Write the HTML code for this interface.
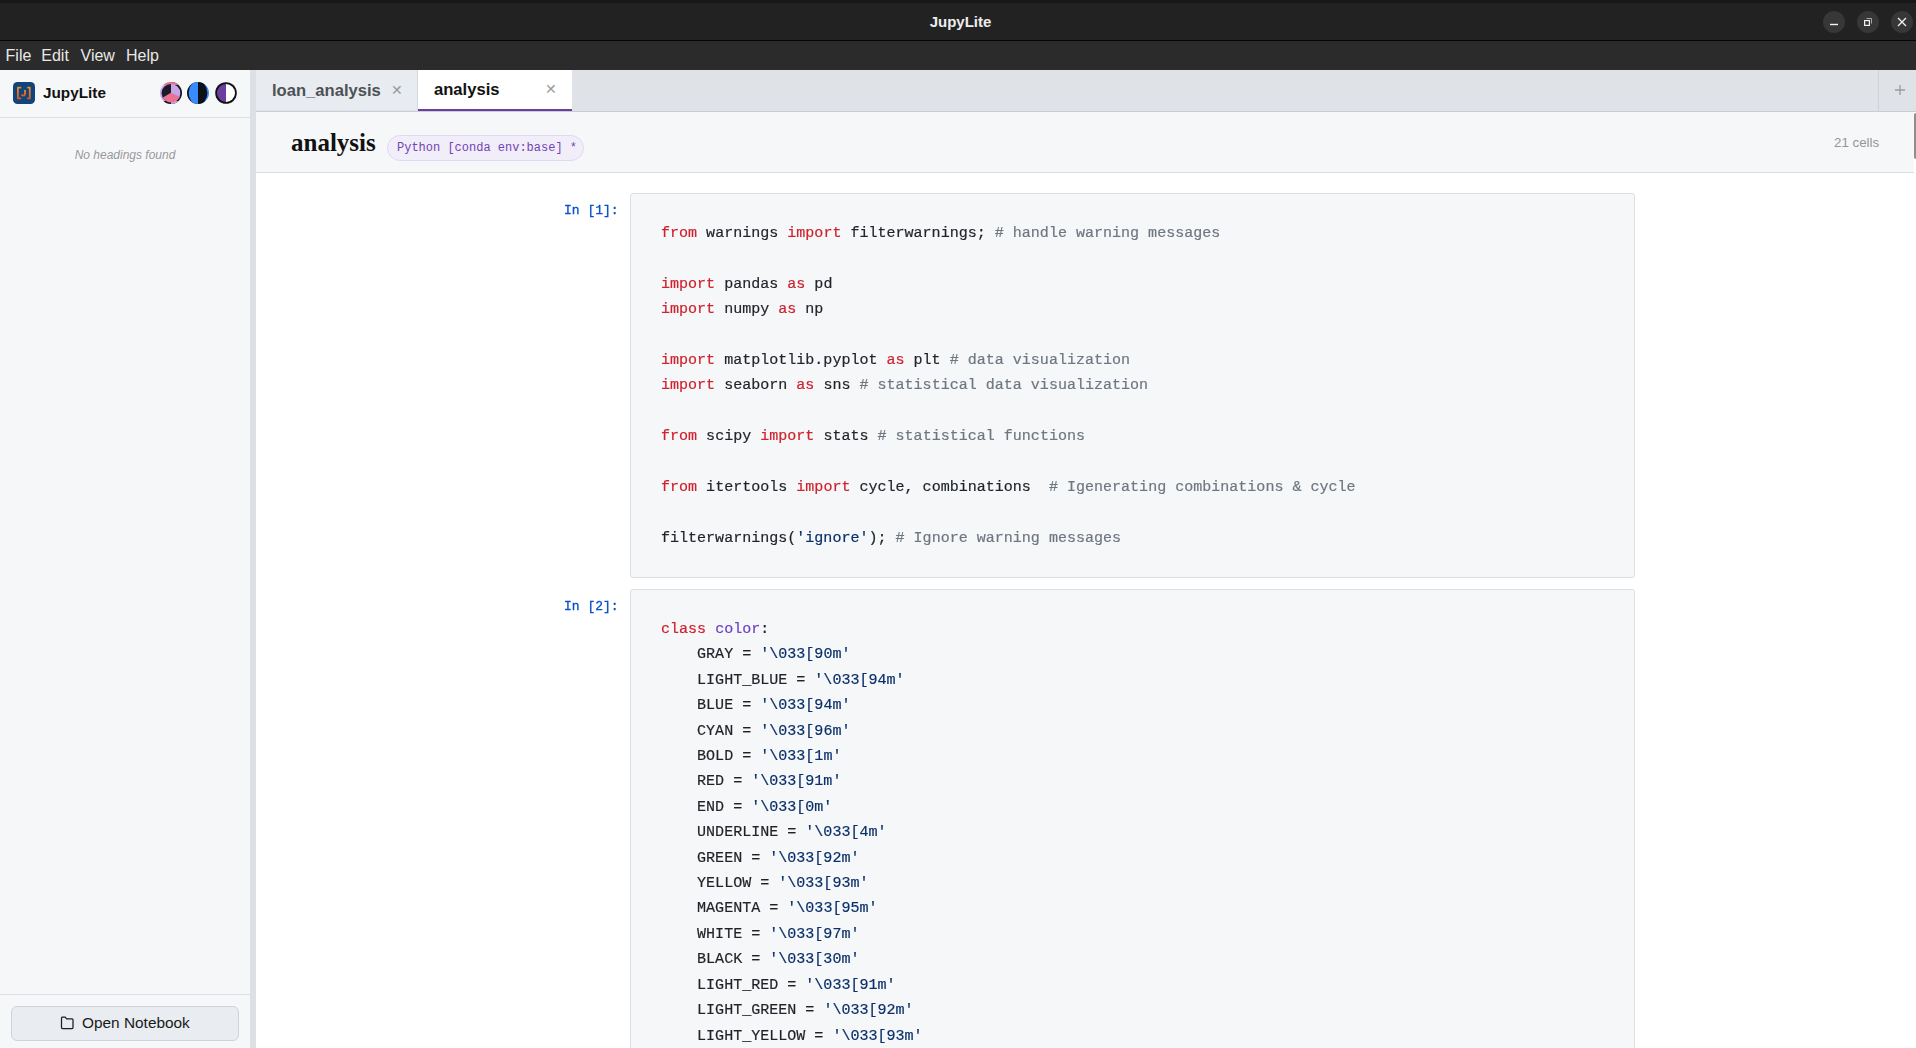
<!DOCTYPE html>
<html><head><meta charset="utf-8">
<style>
*{box-sizing:border-box;margin:0;padding:0}
html,body{width:1916px;height:1048px;overflow:hidden;background:#fff;font-family:"Liberation Sans",sans-serif}
.abs{position:absolute}
#topstrip{left:0;top:0;width:1916px;height:3px;background:#171717}
#titlebar{left:0;top:3px;width:1916px;height:37px;background:#222222}
#titleline{left:0;top:40px;width:1916px;height:1px;background:#050505}
#title{left:2.5px;top:3px;width:1916px;height:37px;line-height:37px;text-align:center;color:#ededed;font-weight:bold;font-size:15px}
.wbtn{top:11px;width:22px;height:22px;border-radius:50%;background:#373737}
#menubar{left:0;top:41px;width:1916px;height:29px;background:#2b2b2b}
.menu{top:41px;height:29px;line-height:29px;color:#e8e8e8;font-size:16px}
#sidebar{left:0;top:70px;width:250px;height:978px;background:#f6f7f9}
#resizer{left:250px;top:70px;width:6px;height:978px;background:#dde1e6}
#sbline1{left:0;top:117px;width:250px;height:1px;background:#dcdfe3}
#sbline2{left:0;top:994px;width:250px;height:1px;background:#dcdfe3}
#tabbar{left:256px;top:70px;width:1660px;height:42px;background:#dfe3e8}
#tabline{left:256px;top:111px;width:1660px;height:1px;background:#c9ced4}
.tab{top:70px;height:40px}
#nbhead{left:256px;top:112px;width:1658px;height:60px;background:#f6f7f9}
#nbheadline{left:256px;top:172px;width:1658px;height:1px;background:#d9dde2}
.cellbox{left:630px;width:1005px;background:#f6f7f9;border:1px solid #dcdfe3;border-radius:3px}
.prompt{left:564px;font-family:"Liberation Mono",monospace;font-size:13px;color:#0a50c8;-webkit-text-stroke:0.3px currentColor;will-change:transform}
pre{font-family:"Liberation Mono",monospace;font-size:15.04px;line-height:25.4px;color:#1f2328;position:absolute;left:661px;-webkit-text-stroke:0.2px currentColor;will-change:transform}
.k{color:#cf222e}.s{color:#0a3069}.c{color:#6e7781}.e{color:#6f42c1}
</style></head><body>
<div class="abs" id="topstrip"></div>
<div class="abs" id="titlebar"></div>
<div class="abs" id="titleline"></div>
<div class="abs" id="title">JupyLite</div>
<div class="abs wbtn" style="left:1823px"><svg width="22" height="22"><path d="M7 13.5 H15" stroke="#f2f2f2" stroke-width="1.4"/></svg></div>
<div class="abs wbtn" style="left:1857px"><svg width="22" height="22"><rect x="7.6" y="9.6" width="4.8" height="4.8" fill="none" stroke="#f2f2f2" stroke-width="1.2"/><path d="M9.5 7.5 H14.5 V12.5" fill="none" stroke="#a8a8a8" stroke-width="1"/></svg></div>
<div class="abs wbtn" style="left:1891px"><svg width="22" height="22"><path d="M7 7 L15 15 M15 7 L7 15" stroke="#f2f2f2" stroke-width="1.3"/></svg></div>
<div class="abs" id="menubar"></div>
<div class="abs menu" style="left:5.6px">File</div>
<div class="abs menu" style="left:41.3px">Edit</div>
<div class="abs menu" style="left:80.5px">View</div>
<div class="abs menu" style="left:126px">Help</div>

<div class="abs" id="sidebar"></div>
<div class="abs" id="resizer"></div>
<div class="abs" id="sbline1"></div>
<div class="abs" id="sbline2"></div>
<div class="abs" id="logo" style="left:13px;top:82px;width:22px;height:22px;border-radius:4.5px;background:#11447a">
<svg width="22" height="22" viewBox="0 0 22 22" style="position:absolute;left:0;top:0">
<defs><linearGradient id="lg" x1="0" y1="0" x2="0" y2="1"><stop offset="0" stop-color="#ec8d1e"/><stop offset="1" stop-color="#e05a20"/></linearGradient></defs>
<path d="M7.5 5.6 H4.9 V16.3 H7.5" fill="none" stroke="url(#lg)" stroke-width="1.8" stroke-linecap="round" stroke-linejoin="round"/>
<path d="M14.9 5.6 H16.8 V16.3 H14.9" fill="none" stroke="url(#lg)" stroke-width="1.8" stroke-linecap="round" stroke-linejoin="round"/>
<path d="M12 8.6 V11.4 Q12 13.5 10.3 13.5 Q9.5 13.5 9 13.1" fill="none" stroke="url(#lg)" stroke-width="1.8" stroke-linecap="round"/>
</svg></div>
<div class="abs" style="left:43px;top:83px;height:20px;line-height:20px;font-size:15.3px;font-weight:bold;color:#111">JupyLite</div>
<svg class="abs" style="left:160px;top:82px" width="22" height="22" viewBox="0 0 22 22">
<defs><clipPath id="c1"><circle cx="11" cy="11" r="11"/></clipPath><clipPath id="c1i"><circle cx="11" cy="11.2" r="9.3"/></clipPath></defs>
<g clip-path="url(#c1)">
<rect x="0" y="0" width="11" height="22" fill="#c6a6e6"/><rect x="11" y="0" width="11" height="22" fill="#15141c"/>
<rect x="0" y="0" width="22" height="3" fill="#e97192"/>
<rect x="0" y="19" width="11" height="3" fill="#15141c"/><rect x="11" y="19" width="11" height="3" fill="#c6a6e6"/>
</g>
<g clip-path="url(#c1i)">
<rect x="0" y="0" width="11" height="22" fill="#1c1a26"/><rect x="11" y="0" width="11" height="22" fill="#c6a6e6"/>
<path d="M11 10.8 L1.5 16.2 V22 H21 V15.6 Z" fill="#e97192"/>
</g>
</svg>
<svg class="abs" style="left:187px;top:82px" width="22" height="22" viewBox="0 0 22 22">
<defs><clipPath id="c2"><circle cx="11" cy="11" r="11"/></clipPath><clipPath id="c2i"><ellipse cx="11" cy="11" rx="9.4" ry="11.5"/></clipPath></defs>
<g clip-path="url(#c2)"><rect x="0" y="0" width="11" height="22" fill="#0d1117"/><rect x="11" y="0" width="11" height="22" fill="#388bfd"/>
<g clip-path="url(#c2i)"><rect x="0" y="-3" width="11" height="28" fill="#388bfd"/><rect x="11" y="-3" width="11" height="28" fill="#0d1117"/></g></g>
</svg>
<svg class="abs" style="left:215px;top:82px" width="22" height="22" viewBox="0 0 22 22">
<circle cx="11" cy="11" r="10.8" fill="#111"/>
<defs><clipPath id="c3i"><circle cx="11" cy="11" r="9"/></clipPath></defs>
<g clip-path="url(#c3i)"><rect x="0" y="0" width="11" height="22" fill="#6b3fa0"/><rect x="11" y="0" width="11" height="22" fill="#fff"/></g>
</svg>
<div class="abs" style="left:0;top:147px;width:250px;text-align:center;font-size:12px;font-style:italic;color:#999;line-height:16px">No headings found</div>
<div class="abs" style="left:11px;top:1006px;width:228px;height:35px;border:1px solid #cfd4d9;border-radius:6px;background:#e9ecf0"></div>
<svg class="abs" style="left:60px;top:1016px" width="15" height="14" viewBox="0 0 15 14">
<path d="M1.5 2.2 Q1.5 1.2 2.5 1.2 H5.2 L6.6 2.8 H12 Q13 2.8 13 3.8 V11.6 Q13 12.6 12 12.6 H2.5 Q1.5 12.6 1.5 11.6 Z" fill="none" stroke="#1d1d1d" stroke-width="1.25" stroke-linejoin="round"/>
</svg>
<div class="abs" style="left:82px;top:1013px;height:20px;line-height:20px;font-size:15.4px;color:#1a1a1a">Open Notebook</div>

<div class="abs" id="tabbar"></div>
<div class="abs" id="tabline"></div>
<div class="abs" id="nbhead"></div>
<div class="abs" id="nbheadline"></div>
<div class="abs" style="left:256px;top:70px;width:162px;height:40px;background:#e8ebef;border-right:1px solid #d3d8dd"></div>
<div class="abs" style="left:272px;top:81px;height:20px;line-height:20px;font-size:16.6px;font-weight:bold;color:#4d5156">loan_analysis</div>
<div class="abs" style="left:391px;top:80px;height:20px;line-height:20px;font-size:14px;color:#9a9a9a">&#x2715;</div>
<div class="abs" style="left:418px;top:70px;width:154px;height:41px;background:#fff;border-bottom:2px solid #6b3fa0"></div>
<div class="abs" style="left:434px;top:80px;height:20px;line-height:20px;font-size:16.6px;font-weight:bold;color:#111">analysis</div>
<div class="abs" style="left:545px;top:79px;height:20px;line-height:20px;font-size:14px;color:#9a9a9a">&#x2715;</div>
<div class="abs" style="left:1878px;top:70px;width:1px;height:41px;background:#cdd2d7"></div>
<svg class="abs" style="left:1894px;top:84px" width="12" height="12" viewBox="0 0 12 12"><path d="M6 1 V11 M1 6 H11" stroke="#9c9c9c" stroke-width="1.3"/></svg>
<div class="abs" style="left:291px;top:128px;height:30px;line-height:30px;font-family:'Liberation Serif',serif;font-size:25px;font-weight:bold;color:#111">analysis</div>
<div class="abs" style="left:387px;top:135px;width:197px;height:26px;border:1px solid #e2d8f2;border-radius:13px;background:#f1edf9"></div>
<div class="abs" style="left:397px;top:140px;height:16px;line-height:16px;font-family:'Liberation Mono',monospace;font-size:12px;color:#7244b4">Python [conda env:base] *</div>
<div class="abs" style="left:1834px;top:135px;height:16px;line-height:16px;font-size:13.3px;color:#959595">21 cells</div>
<div class="abs" style="left:1914px;top:113px;width:2px;height:46px;background:#8e8e8e;border-radius:2px 0 0 2px"></div>

<div class="abs cellbox" style="top:193px;height:385px"></div>
<div class="abs prompt" style="top:203px">In [1]:</div>
<pre style="top:221px"><span class="k">from</span> warnings <span class="k">import</span> filterwarnings; <span class="c"># handle warning messages</span>

<span class="k">import</span> pandas <span class="k">as</span> pd
<span class="k">import</span> numpy <span class="k">as</span> np

<span class="k">import</span> matplotlib.pyplot <span class="k">as</span> plt <span class="c"># data visualization</span>
<span class="k">import</span> seaborn <span class="k">as</span> sns <span class="c"># statistical data visualization</span>

<span class="k">from</span> scipy <span class="k">import</span> stats <span class="c"># statistical functions</span>

<span class="k">from</span> itertools <span class="k">import</span> cycle, combinations  <span class="c"># Igenerating combinations &amp; cycle</span>

filterwarnings(<span class="s">'ignore'</span>); <span class="c"># Ignore warning messages</span></pre>

<div class="abs cellbox" style="top:589px;height:500px"></div>
<div class="abs prompt" style="top:599px">In [2]:</div>
<pre style="top:617px"><span class="k">class</span> <span class="e">color</span>:
    GRAY = <span class="s">'\033[90m'</span>
    LIGHT_BLUE = <span class="s">'\033[94m'</span>
    BLUE = <span class="s">'\033[94m'</span>
    CYAN = <span class="s">'\033[96m'</span>
    BOLD = <span class="s">'\033[1m'</span>
    RED = <span class="s">'\033[91m'</span>
    END = <span class="s">'\033[0m'</span>
    UNDERLINE = <span class="s">'\033[4m'</span>
    GREEN = <span class="s">'\033[92m'</span>
    YELLOW = <span class="s">'\033[93m'</span>
    MAGENTA = <span class="s">'\033[95m'</span>
    WHITE = <span class="s">'\033[97m'</span>
    BLACK = <span class="s">'\033[30m'</span>
    LIGHT_RED = <span class="s">'\033[91m'</span>
    LIGHT_GREEN = <span class="s">'\033[92m'</span>
    LIGHT_YELLOW = <span class="s">'\033[93m'</span></pre>
</body></html>
